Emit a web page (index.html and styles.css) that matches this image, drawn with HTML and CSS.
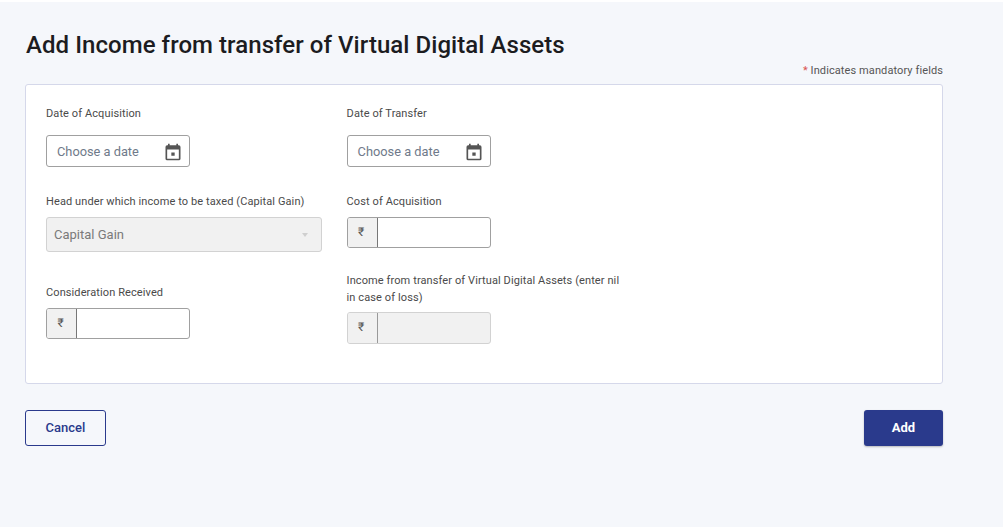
FILE: index.html
```html
<!DOCTYPE html>
<html lang="en">
<head>
<meta charset="utf-8">
<title>Add Income from transfer of Virtual Digital Assets</title>
<link rel="stylesheet" href="styles.css">
</head>
<body>
<main class="page">
  <h1 class="title">Add Income from transfer of Virtual Digital Assets</h1>
  <p class="note"><span class="star">*</span> Indicates mandatory fields</p>
  <section class="card">
    <div class="col col-left">
      <div class="field f-date">
        <label class="label">Date of Acquisition</label>
        <div class="control date">
          <span class="placeholder">Choose a date</span>
          <svg class="cal" viewBox="0 0 24 24" width="20" height="20"><path fill="#555" d="M19 4h-1V2h-2v2H8V2H6v2H5a2 2 0 0 0-2 2v14a2 2 0 0 0 2 2h14a2 2 0 0 0 2-2V6a2 2 0 0 0-2-2zm0 16H5V9h14v11zM10 12.5h4v4h-4z"/></svg>
        </div>
      </div>
      <div class="field f-head">
        <label class="label">Head under which income to be taxed (Capital Gain)</label>
        <div class="control select">
          <span>Capital Gain</span>
          <i class="caret"></i>
        </div>
      </div>
      <div class="field f-consid">
        <label class="label">Consideration Received</label>
        <div class="control money">
          <span class="rupee">₹</span>
          <span class="amount"></span>
        </div>
      </div>
    </div>
    <div class="col col-right">
      <div class="field f-date">
        <label class="label">Date of Transfer</label>
        <div class="control date">
          <span class="placeholder">Choose a date</span>
          <svg class="cal" viewBox="0 0 24 24" width="20" height="20"><path fill="#555" d="M19 4h-1V2h-2v2H8V2H6v2H5a2 2 0 0 0-2 2v14a2 2 0 0 0 2 2h14a2 2 0 0 0 2-2V6a2 2 0 0 0-2-2zm0 16H5V9h14v11zM10 12.5h4v4h-4z"/></svg>
        </div>
      </div>
      <div class="field f-cost">
        <label class="label">Cost of Acquisition</label>
        <div class="control money">
          <span class="rupee">₹</span>
          <span class="amount"></span>
        </div>
      </div>
      <div class="field f-income">
        <label class="label label-wrap">Income from transfer of Virtual Digital Assets (enter nil in case of loss)</label>
        <div class="control money disabled">
          <span class="rupee">₹</span>
          <span class="amount"></span>
        </div>
      </div>
    </div>
  </section>
  <div class="actions">
    <button class="btn btn-cancel" type="button">Cancel</button>
    <button class="btn btn-add" type="button">Add</button>
  </div>
</main>
</body>
</html>
```
FILE: styles.css
```css
* { box-sizing: border-box; }
html, body { margin: 0; height: 100%; }
body {
  background: #f5f7fb;
  border-top: 2px solid #fff;
  font-family: Roboto, "Liberation Sans", sans-serif;
  color: #333;
  overflow: hidden;
}
.page { width: 943px; padding: 0 0 0 25px; }
.title {
  margin: 29px 0 0 1px;
  font-size: 24px;
  line-height: 28px;
  font-weight: 500;
  letter-spacing: .06px;
  color: #1c1c1f;
}
.note {
  margin: 5px 0 0;
  text-align: right;
  font-size: 11px;
  line-height: 14px;
  color: #555;
  letter-spacing: .1px;
}
.star { color: #d9534f; }
.card {
  display: flex;
  height: 300px;
  margin-top: 6px;
  padding: 21px 20px 0;
  background: #fff;
  border: 1px solid #d5d8ea;
  border-radius: 3px;
}
.col { width: 300.6px; display: flex; flex-direction: column; }
.label {
  display: block;
  font-size: 11px;
  line-height: 16px;
  color: #4a4a4a;
  letter-spacing: .1px;
}
.label-wrap { width: 278px; line-height: 17px; }
.control {
  display: flex;
  align-items: center;
  width: 144.4px;
  background: #fff;
  border: 1px solid #a0a0a0;
  border-radius: 3px;
}
.date { height: 32px; margin-top: 13px; padding: 0 6px 0 10px; justify-content: space-between; }
.placeholder { font-size: 12.8px; color: #6f7a8a; }
.cal { flex: none; position: relative; top: 1px; }
.f-head, .f-cost { margin-top: 27px; }
.f-head .control, .f-cost .control, .f-consid .control { margin-top: 7px; }
.select {
  width: 276px;
  height: 35px;
  padding: 0 13px 0 7px;
  justify-content: space-between;
  background: #f1f1f1;
  border-color: #d2d2d2;
  color: #7a7a7a;
  font-size: 13px;
}
.caret {
  width: 0; height: 0;
  border-left: 3.5px solid transparent;
  border-right: 3.5px solid transparent;
  border-top: 4px solid #cfcfcf;
}
.f-consid { margin-top: 33px; }
.money { height: 31px; overflow: hidden; align-items: stretch; }
.rupee {
  width: 30px;
  flex: none;
  display: flex;
  align-items: center;
  justify-content: center;
  padding: 0 2px 1px 0;
  font-size: 12px;
  color: #555;
  background: #f1f1f1;
  border-right: 1px solid #777;
}
.amount { flex: 1; }
.f-income { margin-top: 24px; }
.f-income .control { margin-top: 6px; height: 32px; }
.disabled { border-color: #d2d2d2; background: #f1f1f1; }
.disabled .rupee { border-right-color: #999; padding-bottom: 3px; }
.actions {
  display: flex;
  justify-content: space-between;
  margin-top: 26px;
}
.btn {
  height: 36px;
  padding: 0 0 2px;
  border-radius: 3px;
  font-family: inherit;
  font-size: 13px;
  font-weight: 500;
  cursor: pointer;
}
.btn-cancel {
  width: 81px;
  background: transparent;
  border: 1px solid #2a3a8c;
  color: #2a3a8c;
}
.btn-add {
  width: 79px;
  background: #2a3a8c;
  border: 0;
  color: #fff;
  font-weight: 700;
  box-shadow: 0 1px 2px rgba(0,0,0,.25);
}
```
